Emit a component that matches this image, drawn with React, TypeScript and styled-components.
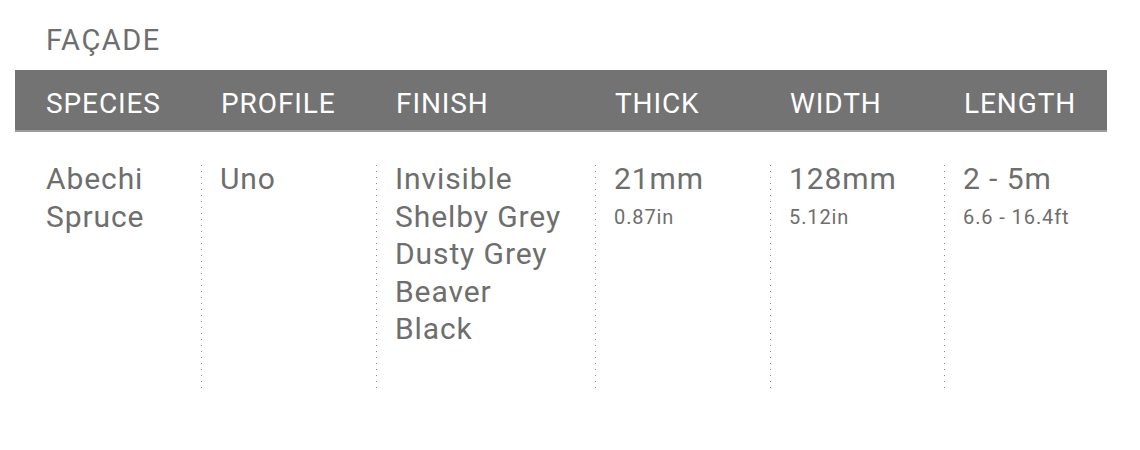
import React from "react";
import styled, { createGlobalStyle } from "styled-components";

const Global = createGlobalStyle`
  html, body { margin: 0; padding: 0; background: #fff; }
  body { font-family: Roboto, "DejaVu Sans", sans-serif; color: #6d6e6d; }
`;

const Wrap = styled.div`
  width: 1140px;
  height: 450px;
  padding: 23px 33px 0 15px;
  box-sizing: border-box;
`;

const Title = styled.h2`
  margin: 0 0 12px 31px;
  font-size: 29px;
  font-weight: 400;
  line-height: 35px;
  letter-spacing: 1.5px;
`;

const Grid = styled.div`
  display: grid;
  grid-template-columns: 186px 175px 219px 175px 174px 1fr;
`;

const HeadCell = styled.div<{ $first?: boolean }>`
  background: #727372;
  color: #fff;
  height: 62px;
  border-bottom: 2px solid #9a9b9a;
  display: flex;
  align-items: center;
  padding-left: ${(p) => (p.$first ? "31px" : "20px")};
  padding-top: 6px;
  box-sizing: border-box;
  font-size: 28px;
  letter-spacing: 0.9px;
`;

const Cell = styled.div<{ $first?: boolean }>`
  margin-top: 33px;
  height: 228px;
  padding-left: ${(p) => (p.$first ? "31px" : "19px")};
  background-image: ${(p) =>
    p.$first
      ? "none"
      : "linear-gradient(to bottom, #8e8f8e 0 1px, transparent 1px 100%)"};
  background-size: 1px 6px;
  background-repeat: repeat-y;
  background-position: 0 0;
  box-sizing: border-box;
`;

const Line = styled.div`
  font-size: 30px;
  line-height: 37.5px;
  margin-top: -5px;
  letter-spacing: 0.9px;
  & + & { margin-top: 0; }
`;

const Sub = styled.div`
  font-size: 20px;
  line-height: 28px;
  margin-top: 5px;
  letter-spacing: 0.9px;
`;

const heads = ["SPECIES", "PROFILE", "FINISH", "THICK", "WIDTH", "LENGTH"];
const cols: { lines: string[]; sub?: string }[] = [
  { lines: ["Abechi", "Spruce"] },
  { lines: ["Uno"] },
  { lines: ["Invisible", "Shelby Grey", "Dusty Grey", "Beaver", "Black"] },
  { lines: ["21mm"], sub: "0.87in" },
  { lines: ["128mm"], sub: "5.12in" },
  { lines: ["2 - 5m"], sub: "6.6 - 16.4ft" },
];

export default function App() {
  return (
    <Wrap>
      <Global />
      <Title>FAÇADE</Title>
      <Grid>
        {heads.map((h, i) => (
          <HeadCell key={h} $first={i === 0}>{h}</HeadCell>
        ))}
        {cols.map((c, i) => (
          <Cell key={i} $first={i === 0}>
            {c.lines.map((l) => (
              <Line key={l}>{l}</Line>
            ))}
            {c.sub && <Sub>{c.sub}</Sub>}
          </Cell>
        ))}
      </Grid>
    </Wrap>
  );
}
